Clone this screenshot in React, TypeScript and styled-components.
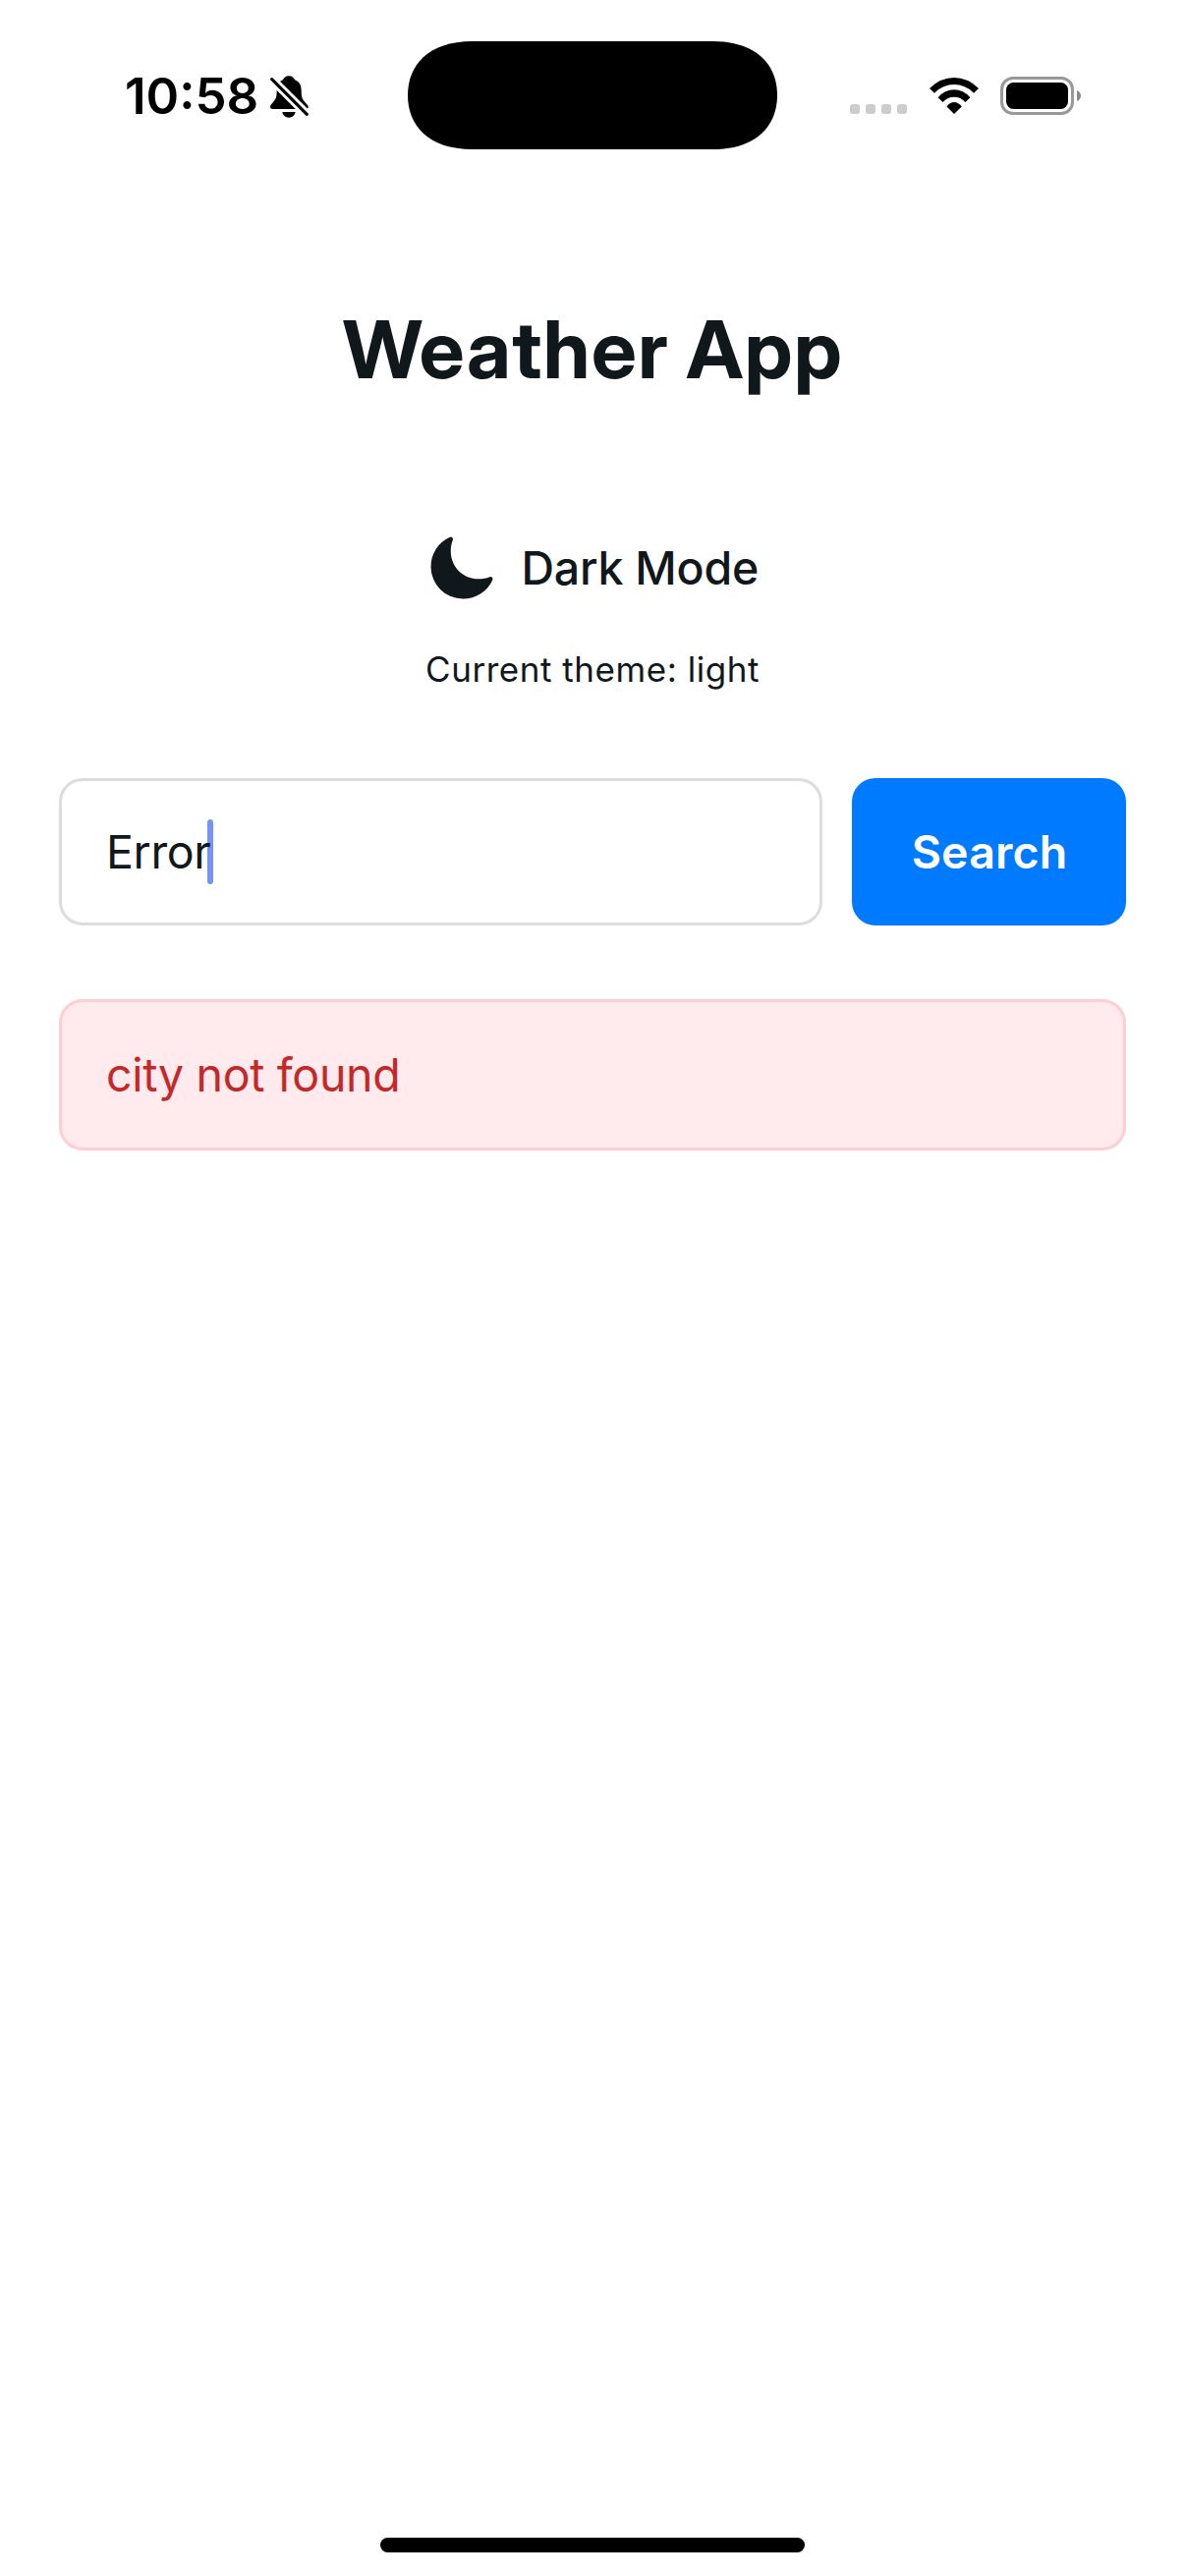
import React from 'react';
import styled, { createGlobalStyle } from 'styled-components';
import { IoMoon } from 'react-icons/io5';

const ink = '#11181c';

const GlobalStyle = createGlobalStyle`
  * { box-sizing: border-box; }
  body {
    margin: 0;
    background: #fff;
    color: ${ink};
    font-family: Inter, "Liberation Sans", sans-serif;
  }
`;

const Screen = styled.div`
  display: flex;
  flex-direction: column;
  width: 1206px;
  height: 2622px;
  background: #fff;
`;

const StatusBar = styled.header`
  display: grid;
  grid-template-columns: 1fr 376px 1fr;
  align-items: center;
  height: 194px;
  color: #000;
`;

const StatusLeft = styled.div`
  display: flex;
  align-items: center;
  gap: 12px;
  padding-left: 127px;
`;

const Clock = styled.span`
  padding-top: 2px;
  font-size: 51px;
  font-weight: 600;
  line-height: 62px;
`;

const BellIcon = styled.svg`
  width: 39px;
  height: 43px;
  margin-top: 3px;
`;

const Island = styled.svg`
  width: 376px;
  height: 110px;
`;

const StatusRight = styled.div`
  display: flex;
  align-items: center;
  justify-content: flex-end;
  gap: 22.5px;
  padding: 1px 106px 0 0;
`;

const SignalDots = styled.div`
  display: flex;
  gap: 6px;
  padding-top: 27px;
`;

const SignalDot = styled.i`
  width: 10px;
  height: 10px;
  border-radius: 3px;
  background: #ccc;
`;

const WifiIcon = styled.svg`
  width: 50px;
  height: 37px;
`;

const BatteryIcon = styled.svg`
  width: 82px;
  height: 39px;
`;

const Content = styled.main`
  flex: 1;
  display: flex;
  flex-direction: column;
  padding: 112px 60px 0;
`;

const Title = styled.h1`
  margin: 0 0 136px;
  padding-left: 1px;
  font-family: "Inter Display", Inter, "Liberation Sans", sans-serif;
  font-size: 81.5px;
  font-weight: 700;
  line-height: 100px;
  letter-spacing: 1.5px;
  word-spacing: -2px;
  text-align: center;
`;

const ThemeToggle = styled.button`
  display: flex;
  align-items: center;
  align-self: center;
  gap: 24.5px;
  height: 72px;
  margin: 0 0 40px;
  padding: 0;
  border: 0;
  background: none;
  color: inherit;
  font: 500 46.5px/60px Inter, "Liberation Sans", sans-serif;
  letter-spacing: -0.25px;
`;

const ThemeNote = styled.p`
  margin: 0 0 84px;
  font-size: 35px;
  line-height: 54px;
  letter-spacing: 0.54px;
  text-align: center;
`;

const SearchRow = styled.form`
  display: flex;
  gap: 30px;
  height: 150px;
  margin-bottom: 75px;
`;

const Field = styled.div`
  flex: 1;
  display: flex;
  align-items: center;
  padding-left: 45px;
  border: 3px solid #ddd;
  border-radius: 24px;
  font-size: 46.5px;
  letter-spacing: -0.4px;
`;

const Typed = styled.span`
  position: relative;
  z-index: 0;
`;

const Caret = styled.span`
  position: absolute;
  z-index: -1;
  top: 50%;
  right: -3px;
  width: 6px;
  height: 66px;
  margin-top: -33px;
  border-radius: 3px;
  background: #7593ff;
`;

const SearchButton = styled.button`
  width: 279px;
  padding: 0 0 0 1px;
  border: 0;
  border-radius: 24px;
  background: #007aff;
  color: #fff;
  font: 600 46.5px/60px Inter, "Liberation Sans", sans-serif;
  letter-spacing: 0.1px;
`;

const ErrorBox = styled.div`
  display: flex;
  align-items: center;
  height: 154px;
  padding-left: 45px;
  border: 3px solid #ffcdd2;
  border-radius: 24px;
  background: #ffebee;
  color: #c62828;
  font-size: 46.5px;
  letter-spacing: -0.33px;
`;

const HomeIndicator = styled.div`
  align-self: center;
  width: 432px;
  height: 15px;
  margin-bottom: 24px;
  border-radius: 8px;
  background: #000;
`;

export default function App() {
  return (
    <>
      <GlobalStyle />
      <Screen>
        <StatusBar>
          <StatusLeft>
            <Clock>10:58</Clock>
            <BellIcon viewBox="33 36 117 129">
              <path
                d="M90 37C81 37 74 42 72 49C58 54 53 66 53 82C53 103 50 108 42 117C36 124 33 127 33 132C33 136 36 138 40 138H141C146 138 149 136 149 132C149 127 145 124 139 117C131 108 128 103 128 82C128 66 122 54 108 49C106 42 99 37 90 37Z"
                fill="#000"
              />
              <path d="M26 35L160 169" stroke="#fff" strokeWidth="26" />
              <path d="M70 147H110C108 157 101 164 90 164C79 164 72 157 70 147Z" fill="#000" />
              <path d="M38 47L145 154" stroke="#000" strokeWidth="9" strokeLinecap="round" />
            </BellIcon>
          </StatusLeft>
          <Island viewBox="0 0 376 110">
            <path
              d="M66 0H310C356 0 376 25 376 55S356 110 310 110H66C20 110 0 85 0 55S20 0 66 0Z"
              fill="#000"
            />
          </Island>
          <StatusRight>
            <SignalDots>
              <SignalDot />
              <SignalDot />
              <SignalDot />
              <SignalDot />
            </SignalDots>
            <WifiIcon viewBox="496 147 151 111">
              <path d="M496 180Q530 147 571.5 147T647 180L632 194Q606 168 571.5 168T511 194Z" />
              <path d="M522 208Q543 184 571.5 184T621 208L606 222Q592 206 571.5 206T537 222Z" />
              <path d="M549 236Q558 222 571.5 222T595 236L571.5 258Z" />
            </WifiIcon>
            <BatteryIcon viewBox="0 0 82 39">
              <rect x="1.5" y="1.5" width="72" height="36" rx="11.5" fill="none" stroke="#999" strokeWidth="3" />
              <rect x="6" y="6" width="63" height="27" rx="7.5" />
              <path d="M78 14C80.500 15 82 17 82 19.500S80.500 24 78 25Z" fill="#888" />
            </BatteryIcon>
          </StatusRight>
        </StatusBar>

        <Content>
          <Title>Weather App</Title>
          <ThemeToggle type="button">
            <IoMoon size={72} />
            Dark Mode
          </ThemeToggle>
          <ThemeNote>Current theme: light</ThemeNote>
          <SearchRow>
            <Field>
              <Typed>
                Error
                <Caret />
              </Typed>
            </Field>
            <SearchButton type="button">Search</SearchButton>
          </SearchRow>
          <ErrorBox role="alert">city not found</ErrorBox>
        </Content>
        <HomeIndicator />
      </Screen>
    </>
  );
}
